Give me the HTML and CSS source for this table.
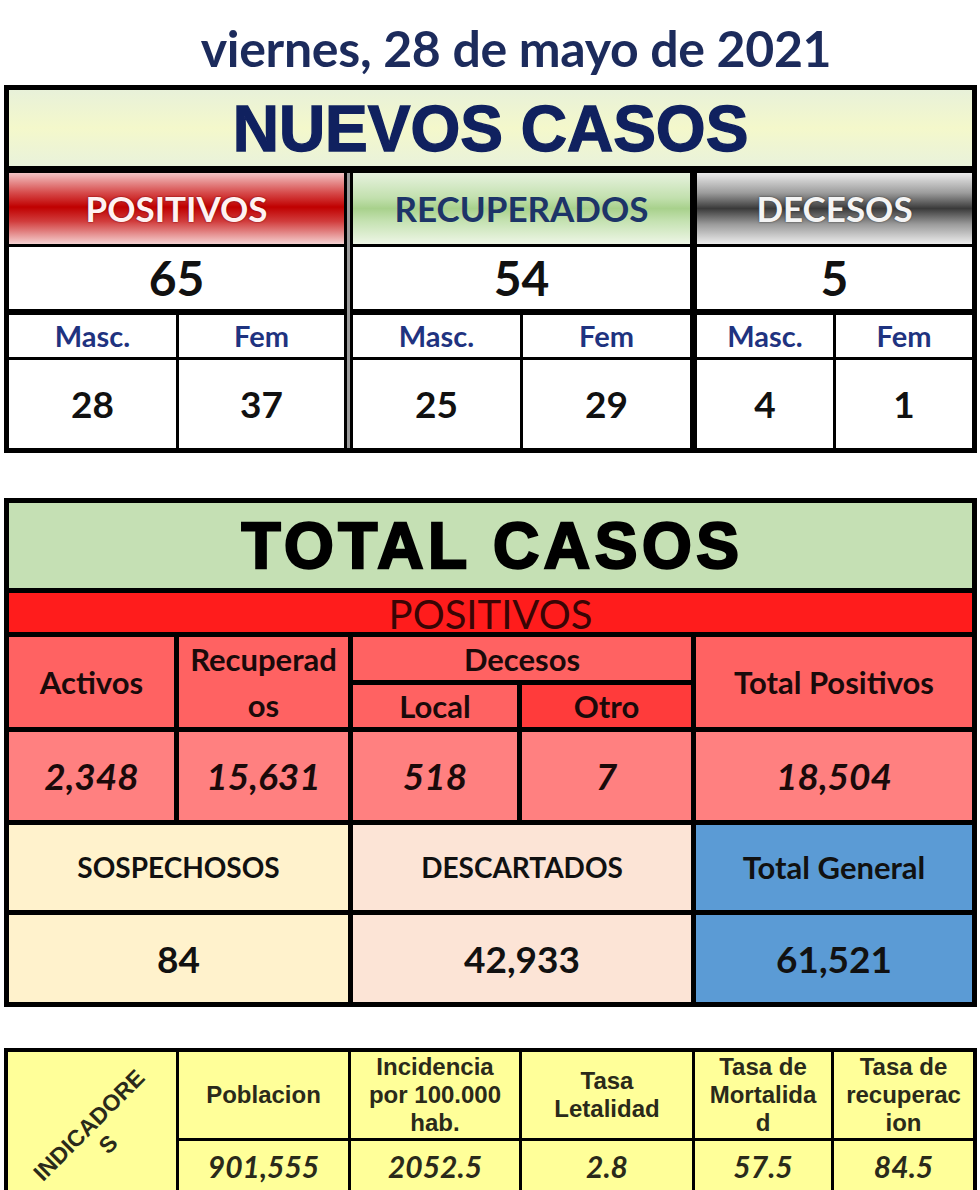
FILE: index.html
```html
<!DOCTYPE html>
<html lang="es">
<head>
<meta charset="utf-8">
<title>Reporte COVID-19</title>
<link rel="stylesheet" href="styles.css">
</head>
<body>
<main class="page">
  <h1 class="date">viernes, 28 de mayo de 2021</h1>

  <section class="nuevos">
    <div class="nuevos-head">NUEVOS CASOS</div>
    <div class="nuevos-body">
      <div class="ncol ncol-1">
        <div class="nlabel lab-pos">POSITIVOS</div>
        <div class="ntotal">65</div>
        <div class="nsplit">
          <div class="nsub">Masc.</div><div class="nsub">Fem</div>
          <div class="nval">28</div><div class="nval">37</div>
        </div>
      </div>
      <div class="sep-double"></div>
      <div class="ncol ncol-2">
        <div class="nlabel lab-rec">RECUPERADOS</div>
        <div class="ntotal">54</div>
        <div class="nsplit">
          <div class="nsub">Masc.</div><div class="nsub">Fem</div>
          <div class="nval">25</div><div class="nval">29</div>
        </div>
      </div>
      <div class="ncol ncol-3">
        <div class="nlabel lab-dec">DECESOS</div>
        <div class="ntotal">5</div>
        <div class="nsplit">
          <div class="nsub">Masc.</div><div class="nsub">Fem</div>
          <div class="nval">4</div><div class="nval">1</div>
        </div>
      </div>
    </div>
  </section>

  <section class="total">
    <div class="total-head">TOTAL CASOS</div>
    <div class="pos-bar">POSITIVOS</div>
    <div class="th th-activos">Activos</div>
    <div class="th th-recup">Recuperad<br>os</div>
    <div class="th th-decesos">Decesos</div>
    <div class="th th-local">Local</div>
    <div class="th th-otro">Otro</div>
    <div class="th th-totpos">Total Positivos</div>
    <div class="tv">2,348</div>
    <div class="tv">15,631</div>
    <div class="tv">518</div>
    <div class="tv">7</div>
    <div class="tv">18,504</div>
    <div class="sum-h sum-sosp">SOSPECHOSOS</div>
    <div class="sum-h sum-desc">DESCARTADOS</div>
    <div class="sum-h sum-gen">Total General</div>
    <div class="sum-v sum-sosp">84</div>
    <div class="sum-v sum-desc">42,933</div>
    <div class="sum-v sum-gen">61,521</div>
  </section>

  <section class="ind">
    <div class="ind-label"><span class="ind-rot">INDICADORE<br>S</span></div>
    <div class="ind-h">Poblacion</div>
    <div class="ind-h">Incidencia<br>por 100.000<br>hab.</div>
    <div class="ind-h">Tasa<br>Letalidad</div>
    <div class="ind-h">Tasa de<br>Mortalida<br>d</div>
    <div class="ind-h">Tasa de<br>recuperac<br>ion</div>
    <div class="ind-v">901,555</div>
    <div class="ind-v">2052.5</div>
    <div class="ind-v">2.8</div>
    <div class="ind-v">57.5</div>
    <div class="ind-v">84.5</div>
  </section>
</main>
</body>
</html>
```

FILE: styles.css
```css
* { box-sizing: border-box; }

html, body {
  margin: 0;
  padding: 0;
  background: #ffffff;
}

body {
  font-family: Lato, "Open Sans", sans-serif;
  color: #111;
  overflow: hidden;
}

.page {
  width: 980px;
  height: 1190px;
  overflow: hidden;
}

.date {
  margin: 0;
  height: 85px;
  padding: 19px 0 0 52px;
  text-align: center;
  font-family: Lato, sans-serif;
  font-weight: 700;
  font-size: 50px;
  line-height: 58px;
  color: #1c2b5c;
  letter-spacing: -0.3px;
}

/* ---------- NUEVOS CASOS ---------- */
.nuevos {
  margin-left: 4px;
  width: 973px;
  background: #000;
  padding: 5px;
}

.nuevos-head {
  height: 76px;
  margin-bottom: 7px;
  background: linear-gradient(180deg, #e8f1d9 0%, #f4f8cb 50%, #e9f2db 100%);
  text-align: center;
  font-family: "Liberation Sans", Arial, sans-serif;
  font-weight: 700;
  font-size: 64px;
  line-height: 78px;
  color: #10215f;
  -webkit-text-stroke: 1.4px #10215f;
}

.nuevos-body {
  display: flex;
}

.ncol {
  display: flex;
  flex-direction: column;
  gap: 3px;
}

.ncol-1 { width: 335px; }
.ncol-2 { width: 337px; margin-right: 7px; }
.ncol-3 { width: 275px; }

.sep-double {
  width: 3px;
  margin: 0 3px;
  background: #9a9a9a;
}

.nlabel {
  height: 71px;
  text-align: center;
  font-weight: 700;
  font-size: 35px;
  line-height: 71px;
}

.lab-pos {
  background: linear-gradient(180deg, #f3c4c4 0%, #d64a4a 28%, #c00000 48%, #d13c3c 68%, #f5d2d2 100%);
  color: #fff2f2;
  text-shadow: 0 0 2px #6a0000;
}

.lab-rec {
  background: linear-gradient(180deg, #e7f2de 0%, #c2e0ae 35%, #a8d18c 50%, #c5e2b2 68%, #eef6e6 100%);
  color: #1d3468;
}

.lab-dec {
  background: linear-gradient(180deg, #ebebeb 0%, #9c9c9c 28%, #3a3a3a 50%, #9a9a9a 72%, #ededed 100%);
  color: #f4f4f4;
  text-shadow: 0 0 2px #333;
}

.ntotal {
  height: 62px;
  background: #fff;
  text-align: center;
  font-weight: 700;
  font-size: 48px;
  line-height: 62px;
  color: #111;
}

.nsplit {
  margin-top: 3px;
  display: grid;
  grid-template-rows: 42px 88px;
  gap: 3px;
}

.ncol-1 .nsplit { grid-template-columns: 167px 165px; }
.ncol-2 .nsplit { grid-template-columns: 167px 167px; }
.ncol-3 .nsplit { grid-template-columns: 136px 136px; }

.nsub {
  background: #fff;
  text-align: center;
  font-weight: 700;
  font-size: 29px;
  line-height: 42px;
  color: #1f3380;
}

.nval {
  background: #fff;
  text-align: center;
  font-weight: 700;
  font-size: 37px;
  line-height: 88px;
  color: #111;
}

/* ---------- TOTAL CASOS ---------- */
.total {
  margin: 45px 0 0 4px;
  width: 973px;
  background: #000;
  padding: 5px;
  display: grid;
  grid-template-columns: 165px 169px 164px 169px 276px;
  grid-template-rows: 85px 39px 43px 42px 88px 85px 87px;
  gap: 5px;
}

.total-head {
  grid-column: 1 / -1;
  background: #c5e0b4;
  text-align: center;
  font-family: "Liberation Sans", Arial, sans-serif;
  font-weight: 700;
  font-size: 64px;
  line-height: 86px;
  letter-spacing: 4.6px;
  padding-left: 4px;
  color: #000;
  -webkit-text-stroke: 2.4px #000;
}

.pos-bar {
  grid-column: 1 / -1;
  background: #ff1c1c;
  text-align: center;
  font-weight: 400;
  font-size: 40px;
  line-height: 39px;
  color: #3a0505;
  padding-top: 2px;
}

.th {
  background: #ff6262;
  display: flex;
  align-items: center;
  justify-content: center;
  text-align: center;
  font-weight: 700;
  font-size: 31px;
  line-height: 44px;
  color: #1a0a0a;
}

.th-activos { grid-column: 1; grid-row: 3 / 5; }
.th-recup { grid-column: 2; grid-row: 3 / 5; line-height: 46px; }
.th-decesos { grid-column: 3 / 5; grid-row: 3; }
.th-local { grid-column: 3; grid-row: 4; }
.th-otro { grid-column: 4; grid-row: 4; background: #ff3b3b; }
.th-totpos { grid-column: 5; grid-row: 3 / 5; }

.tv {
  background: #ff8080;
  text-align: center;
  font-weight: 700;
  font-style: italic;
  font-size: 37px;
  line-height: 88px;
  color: #1a0a0a;
}

.sum-h, .sum-v {
  text-align: center;
  font-weight: 700;
  color: #111;
}

.sum-h {
  font-size: 28px;
  line-height: 85px;
}

.sum-v {
  font-size: 37px;
  line-height: 87px;
}

.sum-sosp { grid-column: 1 / 3; background: #fff2cc; }
.sum-desc { grid-column: 3 / 5; background: #fce4d6; }
.sum-gen { grid-column: 5; background: #5b9bd5; }
.sum-h.sum-gen { font-size: 31px; }

/* ---------- INDICADORES ---------- */
.ind {
  margin: 41px 0 0 4px;
  width: 973px;
  background: #000;
  padding: 4px;
  display: grid;
  grid-template-columns: 168px 169px 168px 170px 136px 139px;
  grid-template-rows: 86px 50px;
  gap: 3px;
}

.ind-label {
  grid-row: 1 / 3;
  background: #ffff99;
  display: flex;
  align-items: center;
  justify-content: center;
  overflow: hidden;
}

.ind-rot {
  display: block;
  transform: rotate(-45deg);
  text-align: center;
  font-family: "Liberation Sans", Arial, sans-serif;
  font-weight: 700;
  font-size: 23px;
  line-height: 27px;
  color: #2a2a1a;
  margin: 26px 0 0 14px;
}

.ind-h {
  background: #ffff99;
  display: flex;
  align-items: center;
  justify-content: center;
  overflow: hidden;
  text-align: center;
  font-family: "Liberation Sans", Arial, sans-serif;
  font-weight: 700;
  font-size: 24px;
  line-height: 28px;
  color: #2a2a1a;
}

.ind-v {
  background: #ffff99;
  text-align: center;
  font-weight: 700;
  font-style: italic;
  font-size: 30px;
  line-height: 50px;
  color: #2a2a1a;
}
```
